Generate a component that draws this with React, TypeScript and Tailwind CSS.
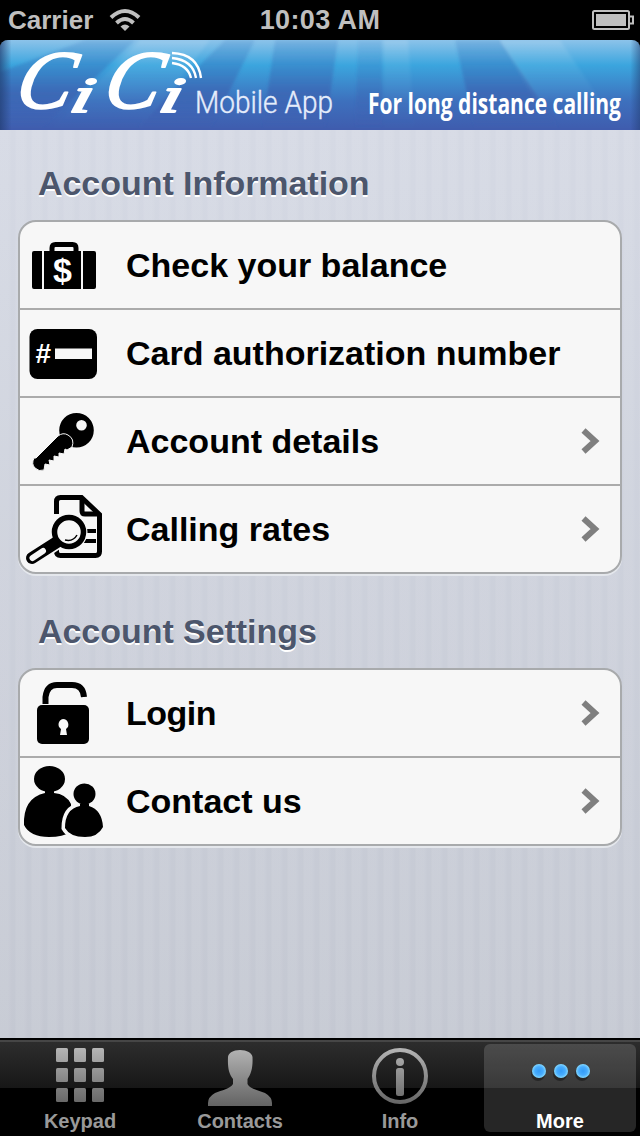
import type { ReactNode } from "react";

type Row = {
  label: string;
  icon: ReactNode;
  link?: boolean;
  labelClass?: string;
};

function SuitcaseIcon() {
  return (
    <svg width="84" height="86" viewBox="0 0 84 86">
      <path d="M32 32v-6q0-3.500 3.500-3.500h17q3.500 0 3.500 3.500v6" fill="none" stroke="#000" strokeWidth="5" />
      <path d="M14 29h8v38h-8q-2 0-2-2V31q0-2 2-2zM24 29h37v38H24zM63 29h11q2 0 2 2v34q0 2-2 2H63z" />
      <text x="42.500" y="60" textAnchor="middle" fontSize="34" fontWeight="700" fill="#fff" className="font-['Liberation_Sans',sans-serif]">
        $
      </text>
    </svg>
  );
}

function CardIcon() {
  return (
    <svg width="84" height="86" viewBox="0 0 84 86">
      <rect x="9.500" y="19" width="67.500" height="50" rx="8" />
      <rect x="35" y="38.500" width="37" height="10.500" fill="#f7f7f7" />
      <text x="15.500" y="53" fontSize="28" fontWeight="700" fill="#fff" className="font-['Liberation_Sans',sans-serif]">
        #
      </text>
    </svg>
  );
}

function KeyIcon() {
  return (
    <svg width="84" height="86" viewBox="0 0 84 86">
      <path
        fillRule="evenodd"
        d="M56.500 15a17.300 17.300 0 1 1 0 34.600a17.300 17.300 0 0 1 0-34.600zM61.500 22a5.300 5.300 0 1 0 0 10.600a5.300 5.300 0 0 0 0-10.600z"
      />
      <path
        d="M16 60L38 38q5-4 10-1q7 4 4 12l-5 3l-2-1l-1 5l-5-1v4l-5-1v5l-5-1l1 5l-5-1l-1 6q-5 2-9-2q-4-4-1-10z"
        stroke="#f7f7f7"
        strokeWidth="1"
      />
    </svg>
  );
}

function RatesIcon() {
  return (
    <svg width="84" height="86" viewBox="0 0 84 86" fill="none" stroke="#000">
      <path d="M36.500 28V15.500q0-4 4-4h21l18 17v37q0 4-4 4h-35q-4 0-4-4v-8" strokeWidth="5" />
      <path d="M62 12v13q0 3 3 3h14" strokeWidth="5" />
      <path d="M64 45h12M63 55h13" strokeWidth="4" />
      <circle cx="49" cy="46" r="17.500" fill="#f7f7f7" stroke="#f7f7f7" strokeWidth="2" />
      <path d="M37 56L13 72" stroke="#f7f7f7" strokeWidth="15" />
      <path d="M37 56L12 72" strokeWidth="12" strokeLinecap="round" />
      <path d="M23 65L12.500 72" stroke="#f7f7f7" strokeWidth="6" strokeLinecap="round" />
      <circle cx="49" cy="46" r="14.500" fill="#f7f7f7" strokeWidth="5.500" />
      <path d="M45 54q8 2 12-5" strokeWidth="1.500" />
    </svg>
  );
}

function LockIcon() {
  return (
    <svg width="84" height="86" viewBox="0 0 84 86">
      <path d="M25.500 34V27Q27 15 37 15H52Q63 15 64 27" fill="none" stroke="#000" strokeWidth="6" />
      <rect x="17" y="35" width="52" height="39" rx="5" />
      <path d="M43 49a5.500 5.500 0 0 1 3 10l1 6h-7l1-6a5.500 5.500 0 0 1 2-10z" fill="#f7f7f7" />
    </svg>
  );
}

function PeopleIcon() {
  return (
    <svg width="84" height="86" viewBox="0 0 84 86">
      <ellipse cx="29.500" cy="21" rx="15.500" ry="13" />
      <path d="M25 33h9v2q12 1 17 11v28q-8 5-22 5Q10 79 4 67Q3 40 25 35z" />
      <path
        d="M60 46h9v2q14 4 15 21q-5 10-19 10Q50 79 45 70Q45 51 60 48z"
        stroke="#f7f7f7"
        strokeWidth="7"
      />
      <path d="M60 46h9v2q13 4 14 21q-5 10-18 10Q50 79 45 70Q45 51 60 48z" />
      <ellipse cx="64.500" cy="36" rx="11" ry="10.500" />
    </svg>
  );
}

const accountInfo: Row[] = [
  { label: "Check your balance", icon: <SuitcaseIcon /> },
  { label: "Card authorization number", icon: <CardIcon /> },
  { label: "Account details", icon: <KeyIcon />, link: true },
  { label: "Calling rates", icon: <RatesIcon />, link: true },
];

const accountSettings: Row[] = [
  { label: "Login", icon: <LockIcon />, link: true, labelClass: "tracking-[-0.5px]" },
  { label: "Contact us", icon: <PeopleIcon />, link: true },
];

function StatusBar() {
  return (
    <div className="grid h-10 grid-cols-3 items-center bg-black px-2 text-[26px] font-bold text-[#bfbfbf]">
      <div className="flex items-center gap-4">
        <span className="leading-10">Carrier</span>
        <svg width="32" height="24" viewBox="0 0 32 24" fill="none" stroke="#bfbfbf" strokeWidth="4">
          <path d="M2 9.500Q16-3.500 30 9.500" />
          <path d="M7.500 15Q16 7 24.500 15" />
          <path d="M11.500 18.500Q16 14.500 20.500 18.500L16 23z" fill="#bfbfbf" stroke="none" />
        </svg>
      </div>
      <span className="text-center text-[27px] leading-10 tracking-[0.4px] whitespace-nowrap">10:03 AM</span>
      <svg className="-mr-0.5 justify-self-end" width="42" height="20" viewBox="0 0 42 20">
        <rect x="1" y="1" width="36" height="18" rx="1.500" fill="none" stroke="#bfbfbf" strokeWidth="2" />
        <rect x="4" y="4" width="30" height="12" fill="#bfbfbf" />
        <path d="M38 6.500h3v7h-3" fill="none" stroke="#bfbfbf" strokeWidth="2" />
      </svg>
    </div>
  );
}

function Banner() {
  return (
    <div className="h-[90px] bg-black">
      <svg className="block overflow-visible" width="640" height="90" viewBox="0 0 640 90">
        <defs>
          <linearGradient id="sky" x1="0" y1="0" x2="0" y2="1">
            <stop offset="0" stopColor="#8cc3ea" />
            <stop offset=".28" stopColor="#3ba5de" />
            <stop offset=".68" stopColor="#3d70bd" />
            <stop offset="1" stopColor="#3f5cae" />
          </linearGradient>
          <linearGradient id="ray" x1="0" y1="0" x2="0" y2="1">
            <stop offset="0" stopColor="#2f78c0" stopOpacity=".2" />
            <stop offset=".6" stopColor="#3b5cac" stopOpacity=".6" />
            <stop offset="1" stopColor="#3f5cae" stopOpacity="0" />
          </linearGradient>
          <linearGradient id="glow" x1="0" y1="0" x2="0" y2="1">
            <stop offset="0" stopColor="#fff" stopOpacity=".12" />
            <stop offset="1" stopColor="#40b4e8" stopOpacity="0" />
          </linearGradient>
          <linearGradient id="edge">
            <stop offset="0" stopColor="#213c70" stopOpacity=".7" />
            <stop offset=".018" stopColor="#213c70" stopOpacity="0" />
            <stop offset=".985" stopColor="#213c70" stopOpacity="0" />
            <stop offset="1" stopColor="#213c70" stopOpacity=".5" />
          </linearGradient>
          <filter id="soft">
            <feGaussianBlur stdDeviation="1.500" />
          </filter>
          <clipPath id="banner">
            <rect width="640" height="98" rx="8" />
          </clipPath>
        </defs>
        <g clipPath="url(#banner)">
          <rect width="640" height="90" fill="url(#sky)" />
          <g filter="url(#soft)">
            <path d="M85 0L0 32V90H40L135 0zM225 0L135 90H210L255 0zM275 0L262 90H325L338 0zM455 0L475 90H560L500 0z" fill="url(#ray)" />
            <path d="M358 0L355 90H382L382 0z" fill="url(#ray)" opacity=".5" />
            <path d="M140 0L50 90H140L210 0zM384 0L384 90H415L408 0zM500 0L535 60H600L560 0z" fill="url(#glow)" />
          </g>
          <path d="M0 88h640v2H0z" fill="#3f5cae" />
          <rect width="640" height="90" fill="url(#edge)" />
        </g>
        <g
          fill="#fff"
          stroke="#fff"
          strokeWidth="2"
          strokeLinejoin="round"
          className="font-['Liberation_Serif',serif] text-[83px] italic"
        >
          <text transform="translate(13 68) skewX(-13)">C</text>
          <text transform="translate(68 72) skewX(-14) scale(1.6 1)" className="text-[50px]">i</text>
          <text transform="translate(101 68) skewX(-13)">C</text>
          <text transform="translate(157 72) skewX(-14) scale(1.6 1)" className="text-[50px]">i</text>
        </g>
        <g fill="none" stroke="#fff" strokeWidth="2.400">
          <path d="M172 13Q198 14 201 38" />
          <path d="M172 18Q193 20 196 38" />
          <path d="M172 23Q188 25 191 38" />
        </g>
        <text x="195" y="73" fontSize="31" fill="#e5edfb" stroke="#e5edfb" strokeWidth=".4" textLength="138" lengthAdjust="spacingAndGlyphs" className="font-['Roboto',sans-serif] font-light">
          Mobile App
        </text>
        <text x="368" y="74" fontSize="28.500" fill="#fff" textLength="253" lengthAdjust="spacingAndGlyphs" className="font-['Open_Sans',sans-serif] font-bold">
          For long distance calling
        </text>
      </svg>
    </div>
  );
}

function Section({ title, rows }: { title: string; rows: Row[] }) {
  return (
    <section>
      <h2 className="h-[90px] pt-8 pl-[38px] text-[34px] leading-[42px] font-bold tracking-[-0.05px] text-[#4c566c] [text-shadow:0_2px_0_#fff]">
        {title}
      </h2>
      <ul className="mx-[18px] overflow-hidden rounded-[18px] border-2 border-[#a8aaac] bg-[#f7f7f7] shadow-[0_2px_0_#e4e7ec]">
        {rows.map((row) => (
          <li key={row.label} className="flex h-[88px] items-start border-b-2 border-[#ababab] last:h-[86px] last:border-b-0">
            {row.icon}
            <span className={`ml-[22px] grow text-[34px] leading-[86px] font-bold whitespace-nowrap text-black ${row.labelClass ?? ""}`}>
              {row.label}
            </span>
            {row.link && (
              <svg className="mt-[30px] mr-[20px]" width="19" height="26" viewBox="0 0 19 26">
                <path d="M2.500 2.500L14 13L2.500 23.500" fill="none" stroke="#7f7f7f" strokeWidth="6" />
              </svg>
            )}
          </li>
        ))}
      </ul>
    </section>
  );
}

function TabBar() {
  return (
    <nav className="grid h-[98px] grid-cols-4 border-t-2 border-black bg-[linear-gradient(#464646_0px,#464646_2px,#2d2d2d_2px,#171717_48px,#000_48px)] text-[20px] font-bold text-[#999]">
      <svg width="0" height="0" className="absolute">
        <defs>
          <linearGradient id="metal" gradientUnits="userSpaceOnUse" x1="0" y1="0" x2="0" y2="60">
            <stop offset="0" stopColor="#b5b5b5" />
            <stop offset="1" stopColor="#606060" />
          </linearGradient>
          <radialGradient id="dot">
            <stop offset="0" stopColor="#329bf7" />
            <stop offset=".6" stopColor="#48adff" />
            <stop offset="1" stopColor="#83d8ff" />
          </radialGradient>
        </defs>
      </svg>
      <div className="flex flex-col items-center pt-2">
        <svg width="64" height="60" viewBox="0 0 64 60" fill="url(#metal)">
          {[0, 20, 40].map((y) =>
            [8, 26, 44].map((x) => <rect key={`${x}-${y}`} x={x} y={y} width="12" height="14" rx="1.500" />)
          )}
        </svg>
        <span className="mt-px leading-6">Keypad</span>
      </div>
      <div className="flex flex-col items-center pt-2">
        <svg width="64" height="60" viewBox="0 0 64 60" fill="url(#metal)">
          <path d="M32 2C39 2 44 5 44.500 9C45 20 43 26 39.500 31V36C42 41 50 42 57 45Q64 49 64 55V58H0V55Q0 49 7 45C14 42 22 41 25 36V31C21 26 19.500 20 20 9C20.500 5 25 2 32 2z" />
        </svg>
        <span className="mt-px leading-6">Contacts</span>
      </div>
      <div className="flex flex-col items-center pt-2">
        <svg width="64" height="60" viewBox="0 0 64 60">
          <circle cx="32" cy="28" r="26" fill="none" stroke="url(#metal)" strokeWidth="4" />
          <circle cx="32" cy="14" r="4" fill="url(#metal)" />
          <rect x="28" y="20" width="8" height="28" rx="2.500" fill="url(#metal)" />
        </svg>
        <span className="mt-px leading-6">Info</span>
      </div>
      <div className="mx-1 mt-1 flex h-[88px] flex-col items-center rounded-md bg-white/15 pt-1 text-white">
        <svg className="shrink-0" width="64" height="60" viewBox="0 0 64 60">
          <g fill="#000" opacity=".35">
            <circle cx="10" cy="26" r="7" />
            <circle cx="32" cy="26" r="7" />
            <circle cx="54" cy="26" r="7" />
          </g>
          <g fill="url(#dot)">
            <circle cx="11" cy="23" r="7" />
            <circle cx="33" cy="23" r="7" />
            <circle cx="55" cy="23" r="7" />
          </g>
        </svg>
        <span className="mt-px leading-6">More</span>
      </div>
    </nav>
  );
}

export default function App() {
  return (
    <div className="flex h-[1136px] w-[640px] flex-col overflow-hidden bg-black font-['Liberation_Sans',Arial,sans-serif]">
      <StatusBar />
      <Banner />
      <main className="grow bg-[repeating-linear-gradient(90deg,#ffffff12_0px,#ffffff12_8px,#ffffff00_12px,#ffffff00_15px,#ffffff12_16px),linear-gradient(#d5d9e4,#c4c8d2)]">
        <Section title="Account Information" rows={accountInfo} />
        <div className="h-1" />
        <Section title="Account Settings" rows={accountSettings} />
      </main>
      <TabBar />
    </div>
  );
}
